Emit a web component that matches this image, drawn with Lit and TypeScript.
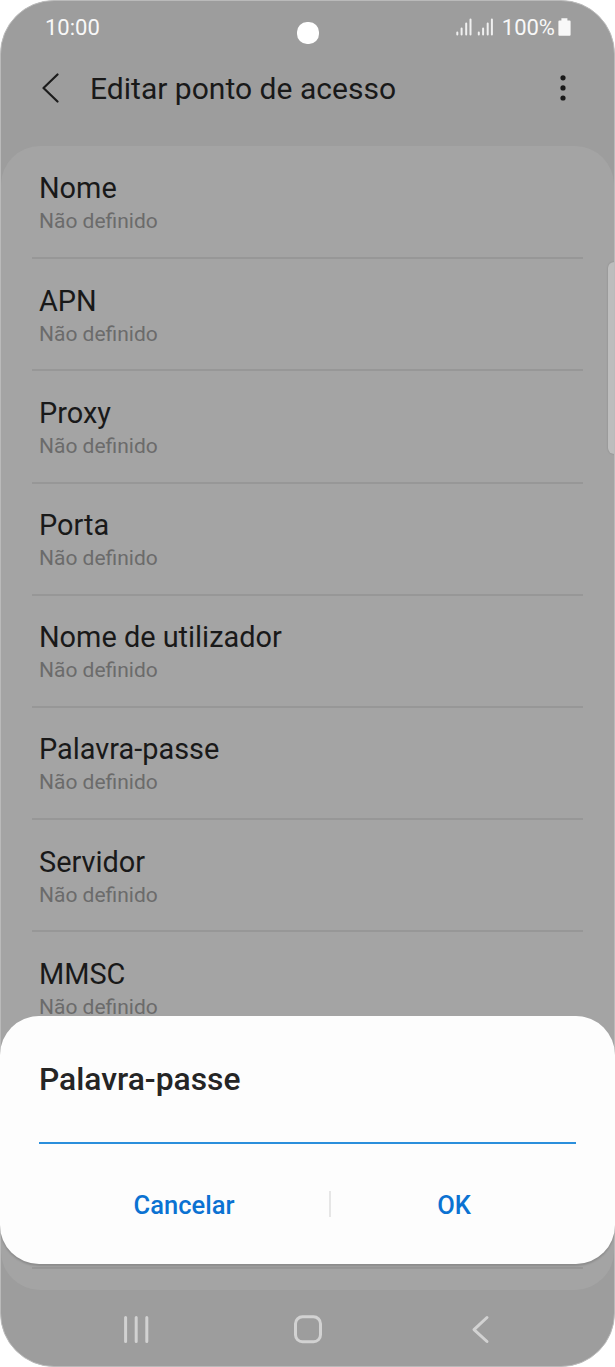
import { LitElement, css, html } from 'lit'
import { customElement, property } from 'lit/decorators.js'

@customElement('status-bar')
export class StatusBar extends LitElement {
  @property({ type: String }) time = '10:00'
  @property({ type: String }) battery = '100%'

  render() {
    return html`
      <span class="time">${this.time}</span>
      <div class="right">
        <svg class="signal" width="37" height="18" viewBox="0 0 37 18">
          <path d="M1.300 14.500v2M5.600 10.500v6M10.200 5.500v11M14.500 1.500v15M22.800 14.500v2M27.100 10.500v6M31.700 5.500v11M35.900 1.500v15" />
        </svg>
        <span class="level">${this.battery}</span>
        <svg class="battery" width="13" height="19" viewBox="0 0 13 19">
          <path d="M3.4 0.2h6v2.200h2.200a1 1 0 0 1 1 1v13.400a1 1 0 0 1-1 1H1.400a1 1 0 0 1-1-1V3.400a1 1 0 0 1 1-1h2z" />
        </svg>
      </div>
      <div class="camera"></div>
    `
  }

  static styles = css`
    :host {
      display: flex;
      position: relative;
      justify-content: space-between;
      align-items: center;
      box-sizing: border-box;
      height: 52px;
      padding: 0 43px 0 44px;
      font-size: 22px;
      color: #f8f8f8;
    }
    .right {
      display: flex;
      align-items: center;
    }
    .signal {
      margin-right: 9px;
      stroke: #f0f0f0;
      stroke-width: 2;
      stroke-linecap: round;
    }
    .level {
      margin-right: 3px;
    }
    .battery {
      fill: #f8f8f8;
    }
    .camera {
      position: absolute;
      left: 50%;
      top: 21px;
      width: 22px;
      height: 22px;
      margin-left: -11px;
      border-radius: 10px;
      background: #fff;
    }
  `
}

@customElement('apn-row')
export class ApnRow extends LitElement {
  @property({ type: String }) name = ''
  @property({ type: String }) value = 'Não definido'

  render() {
    return html`
      <div class="name">${this.name}</div>
      <div class="value">${this.value}</div>
    `
  }

  static styles = css`
    :host {
      display: block;
      box-sizing: border-box;
      height: 112.2px;
      margin: 0 31px;
      padding: 23.4px 7px 0;
      border-bottom: 2px solid #979797;
    }
    .name {
      font-size: 28.9px;
      line-height: 36px;
      color: #191919;
    }
    .value {
      font-size: 21px;
      line-height: 30px;
      color: #6b6b6b;
    }
  `
}

@customElement('input-dialog')
export class InputDialog extends LitElement {
  @property({ type: String }) heading = ''

  render() {
    return html`
      <div class="heading">${this.heading}</div>
      <div class="field"></div>
      <div class="buttons">
        <div class="button cancel">Cancelar</div>
        <div class="line"></div>
        <div class="button ok">OK</div>
      </div>
    `
  }

  static styles = css`
    :host {
      display: flex;
      flex-direction: column;
      box-sizing: border-box;
      height: 248px;
      padding: 43px 39px 0;
      border-radius: 39px;
      background: #fdfdfd;
      box-shadow: 0 2px 2px rgba(0, 0, 0, 0.15);
    }
    .heading {
      font-size: 31.8px;
      font-weight: 500;
      line-height: 40px;
      color: #252525;
    }
    .field {
      height: 43px;
      border-bottom: 2px solid #2b8fdc;
    }
    .buttons {
      display: flex;
      align-items: center;
      height: 26px;
      margin-top: 47px;
    }
    .button {
      padding-top: 2px;
      font-size: 25.5px;
      font-weight: 500;
      text-align: center;
      color: #0b72d2;
    }
    .cancel {
      width: 290px;
    }
    .ok {
      flex: 1;
      padding-left: 1px;
    }
    .line {
      width: 2px;
      height: 26px;
      background: #e6e6e6;
    }
  `
}

@customElement('app-root')
export class AppRoot extends LitElement {
  rows = ['Nome', 'APN', 'Proxy', 'Porta', 'Nome de utilizador', 'Palavra-passe', 'Servidor', 'MMSC']

  render() {
    return html`
      <div class="phone">
        <status-bar></status-bar>
        <header>
          <svg width="18" height="32" viewBox="0 0 18 32">
            <path d="M16.500 2.500L2.500 16L16.500 29.500" />
          </svg>
          <h1>Editar ponto de acesso</h1>
          <svg class="more" width="6" height="32" viewBox="0 0 6 32">
            <circle cx="3" cy="5.800" r="2.600" />
            <circle cx="3" cy="15.900" r="2.600" />
            <circle cx="3" cy="26" r="2.600" />
          </svg>
        </header>
        <main>
          ${this.rows.map((row) => html`<apn-row name=${row}></apn-row>`)}
          <div class="rest"></div>
        </main>
        <nav>
          <svg width="28" height="30" viewBox="0 0 28 30">
            <path d="M3.600 3.500v24M14.200 3.500v24M24.800 3.500v24" />
          </svg>
          <svg width="28" height="30" viewBox="0 0 28 30">
            <rect x="1.500" y="2.800" width="25" height="25" rx="7" />
          </svg>
          <svg width="28" height="30" viewBox="0 0 28 30">
            <path d="M21 3.500L8 15.600L21 27.500" />
          </svg>
        </nav>
        <div class="edge"></div>
      </div>
      <input-dialog heading="Palavra-passe"></input-dialog>
    `
  }

  static styles = css`
    :host {
      display: block;
      position: relative;
      width: 615px;
      height: 1367px;
      overflow: hidden;
      background: #fff;
      font-family: Roboto, 'Liberation Sans', sans-serif;
    }
    .phone {
      display: flex;
      flex-direction: column;
      position: relative;
      box-sizing: border-box;
      height: 1367px;
      overflow: hidden;
      border: 1px solid #bababa;
      border-radius: 54px;
      background: #9d9d9d;
    }
    header {
      display: flex;
      align-items: center;
      height: 70px;
      padding: 0 48px 0 40px;
    }
    header svg {
      fill: none;
      stroke: #1c1c1c;
      stroke-width: 2.2;
      stroke-linecap: round;
      stroke-linejoin: round;
    }
    header .more {
      margin-left: auto;
      fill: #191919;
      stroke: none;
    }
    h1 {
      margin: 0 0 0 31px;
      font-size: 30.05px;
      font-weight: 400;
      color: #191919;
    }
    main {
      box-sizing: border-box;
      height: 1144px;
      margin-top: 23px;
      padding-top: 1px;
      flex: none;
      overflow: hidden;
      border-radius: 39px;
      background: #a4a4a4;
    }
    .rest {
      box-sizing: border-box;
      height: 224.4px;
      margin: 0 31px;
      border-bottom: 2px solid #979797;
    }
    nav {
      display: flex;
      flex: 1;
      align-items: center;
      justify-content: space-between;
      padding: 1px 120px 0 121px;
    }
    nav svg {
      fill: none;
      stroke: #d2d2d2;
      stroke-width: 3;
      stroke-linecap: round;
      stroke-linejoin: round;
    }
    .edge {
      position: absolute;
      right: -6px;
      top: 261px;
      width: 12px;
      height: 192px;
      border-radius: 6px;
      background: #bdbdbd;
      box-shadow: 0 0 2px rgba(0, 0, 0, 0.2);
    }
    input-dialog {
      position: absolute;
      left: 0;
      right: 0;
      top: 1016px;
    }
  `
}
